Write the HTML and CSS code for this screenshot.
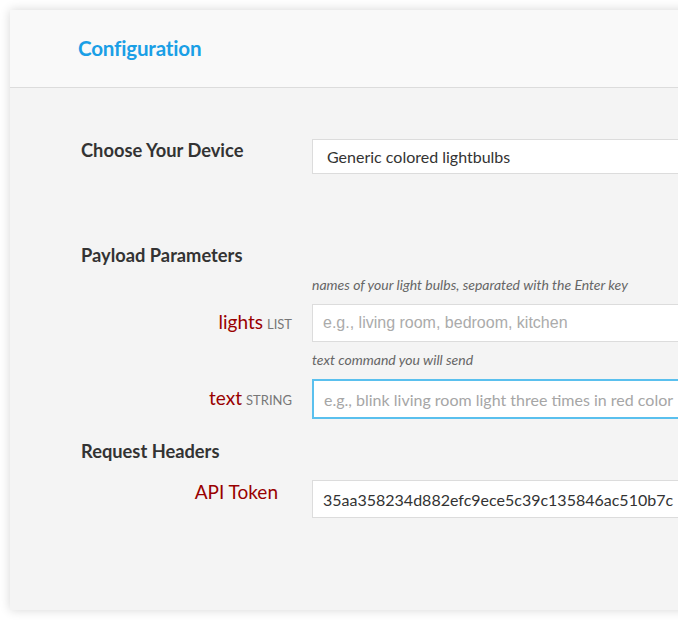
FILE: index.html
```html
<!DOCTYPE html>
<html>
<head>
<meta charset="utf-8">
<link rel="stylesheet" href="styles.css">
</head>
<body>
<div class="card">
  <div class="card-header">
    <h1 class="title">Configuration</h1>
  </div>
  <div class="card-body">
    <div class="row device-row">
      <div class="section-title">Choose Your Device</div>
      <div class="field">
        <div class="select">Generic colored lightbulbs</div>
      </div>
    </div>

    <div class="section-title payload-title">Payload Parameters</div>
    <div class="row">
      <div class="label"></div>
      <div class="help">names of your light bulbs, separated with the Enter key</div>
    </div>
    <div class="row param-row">
      <div class="label"><span class="name">lights</span><span class="type">LIST</span></div>
      <div class="field"><div class="input placeholder alt-font">e.g., living room, bedroom, kitchen</div></div>
    </div>
    <div class="row">
      <div class="label"></div>
      <div class="help">text command you will send</div>
    </div>
    <div class="row param-row">
      <div class="label"><span class="name">text</span><span class="type">STRING</span></div>
      <div class="field"><div class="input placeholder focused">e.g., blink living room light three times in red color</div></div>
    </div>

    <div class="section-title headers-title">Request Headers</div>
    <div class="row param-row token-row">
      <div class="label token-label"><span class="name">API Token</span></div>
      <div class="field"><div class="input value">35aa358234d882efc9ece5c39c135846ac510b7c</div></div>
    </div>
  </div>
</div>
</body>
</html>
```

FILE: styles.css
```css
html, body {
  margin: 0;
  padding: 0;
  background: #ffffff;
  overflow: hidden;
}

body {
  font-family: Lato, "Open Sans", sans-serif;
  width: 678px;
  height: 620px;
}

.card {
  margin: 10px 0 0 10px;
  width: 760px;
  height: 600px;
  box-shadow: 0 0 10px rgba(0, 0, 0, 0.16);
  background: #f4f4f4;
}

.card-header {
  height: 78px;
  background: #f9f9f9;
  border-bottom: 1px solid #dcdcdc;
  display: flex;
  align-items: center;
  padding-left: 68px;
  box-sizing: border-box;
}

.title {
  margin: 0;
  font-size: 20.6px;
  font-weight: 700;
  color: #1a9fe6;
  letter-spacing: -0.2px;
  padding-bottom: 2px;
}

.card-body {
  padding: 50px 0 0 71px;
}

.row {
  display: grid;
  grid-template-columns: 211px 1fr;
  column-gap: 20px;
}

.param-row {
  align-items: center;
}

.section-title {
  font-size: 18.3px;
  font-weight: 700;
  color: #333333;
  line-height: 24px;
}

.device-row .field {
  padding-top: 1px;
}

.select {
  height: 35px;
  box-sizing: border-box;
  border: 1px solid #dcdcdc;
  background: #ffffff;
  font-size: 16px;
  color: #333;
  padding: 0 14px;
  display: flex;
  align-items: center;
}

.payload-title {
  margin-top: 69px;
}

.help {
  font-size: 14px;
  font-style: italic;
  color: #666666;
  line-height: 18px;
  margin: 9px 0 10px;
}

.label {
  text-align: right;
  line-height: 24px;
}

.name {
  font-size: 19px;
  color: #990000;
}

.type {
  font-size: 13px;
  color: #777777;
  margin-left: 4px;
}

.input {
  height: 38px;
  box-sizing: border-box;
  border: 1px solid #dcdcdc;
  background: #ffffff;
  font-size: 16px;
  padding: 0 10px;
  display: flex;
  align-items: center;
  white-space: nowrap;
}

.placeholder {
  color: #a6a6a6;
}

.alt-font {
  font-family: "Liberation Sans", Arial, sans-serif;
  color: #ababab;
}

.focused {
  height: 40px;
  border: 2px solid #5ac0ee;
  padding-left: 10px;
}

.value {
  color: #333333;
}

.headers-title {
  margin-top: 20px;
}

.token-row {
  margin-top: 17px;
  align-items: start;
}

.token-label {
  padding-right: 14px;
}

.token-row .field {
  padding-top: 0;
}
```
